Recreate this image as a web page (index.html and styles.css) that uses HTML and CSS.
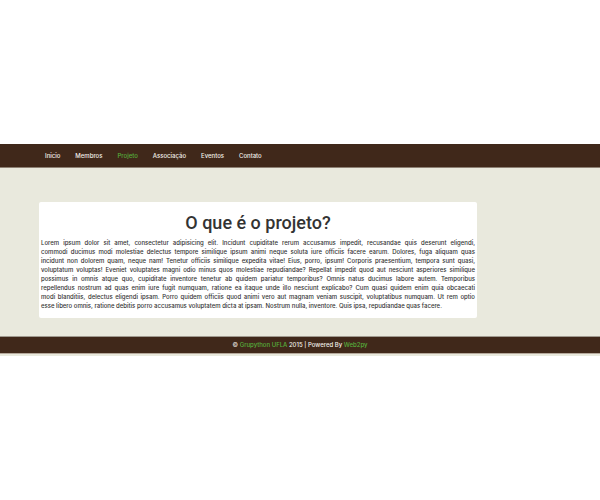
FILE: index.html
```html
<!DOCTYPE html>
<html lang="pt-BR">
<head>
<meta charset="utf-8">
<meta name="viewport" content="width=device-width, initial-scale=1">
<title>O que é o projeto?</title>
<link rel="stylesheet" href="styles.css">
</head>
<body>
<div class="page">
  <nav class="navbar">
    <ul class="menu">
      <li><a href="#">Inicio</a></li>
      <li><a href="#">Membros</a></li>
      <li><a class="active" href="#">Projeto</a></li>
      <li><a href="#">Associação</a></li>
      <li><a href="#">Eventos</a></li>
      <li><a href="#">Contato</a></li>
    </ul>
  </nav>
  <main class="content">
    <article class="panel">
      <h1>O que é o projeto?</h1>
      <p>
        <span class="line">Lorem ipsum dolor sit amet, consectetur adipisicing elit. Incidunt cupiditate rerum accusamus impedit, recusandae quis deserunt eligendi,</span>
        <span class="line">commodi ducimus modi molestiae delectus tempore similique ipsum animi neque soluta iure officiis facere earum. Dolores, fuga aliquam quas</span>
        <span class="line">incidunt non dolorem quam, neque nam! Tenetur officiis similique expedita vitae! Eius, porro, ipsum! Corporis praesentium, tempora sunt quasi,</span>
        <span class="line">voluptatum voluptas! Eveniet voluptates magni odio minus quos molestiae repudiandae? Repellat impedit quod aut nesciunt asperiores similique</span>
        <span class="line">possimus in omnis atque quo, cupiditate inventore tenetur ab quidem pariatur temporibus? Omnis natus ducimus labore autem. Temporibus</span>
        <span class="line">repellendus nostrum ad quas enim iure fugit numquam, ratione ea itaque unde illo nesciunt explicabo? Cum quasi quidem enim quia obcaecati</span>
        <span class="line">modi blanditiis, delectus eligendi ipsam. Porro quidem officiis quod animi vero aut magnam veniam suscipit, voluptatibus numquam. Ut rem optio</span>
        <span class="line">esse libero omnis, ratione debitis porro accusamus voluptatem dicta at ipsam. Nostrum nulla, inventore. Quis ipsa, repudiandae quas facere.</span>
      </p>
    </article>
  </main>
  <footer class="footer">© <a href="#">Grupython UFLA</a> 2015 | Powered By <a href="#">Web2py</a></footer>
</div>
</body>
</html>
```
FILE: styles.css
```css
* {
  box-sizing: border-box;
}

body {
  margin: 0;
  padding-top: 144px;
  background: #fff;
  color: #333;
  font-family: Inter, "Liberation Sans", Arial, sans-serif;
  font-size: 6px;
  font-weight: 500;
  line-height: 9px;
}

a {
  text-decoration: none;
}

.page {
  background: #e9e9dd;
  padding-bottom: 2px;
}

.navbar {
  background: #40281a;
  border-bottom: 1px solid #8d8073;
}

.menu {
  display: flex;
  gap: 15px;
  margin: 0;
  padding: 7px 45px 7px;
  list-style: none;
}

.menu a {
  color: #f4f1ec;
}

.menu a.active,
.footer a {
  color: #56b03c;
}

.content {
  padding: 34px 123px 18px 39px;
}

.panel {
  padding: 11px 2px 8px;
  background: #fff;
  border-radius: 2px;
}

.panel h1 {
  margin: 0 0 5px;
  font-family: Roboto, "Liberation Sans", Arial, sans-serif;
  font-size: 18px;
  font-weight: 500;
  line-height: 20px;
  text-align: center;
}

.panel p {
  margin: 0;
}

.line {
  display: block;
  text-align: justify;
  text-align-last: justify;
}

.line:last-child {
  text-align-last: left;
}

.footer {
  padding: 3px 0 4px;
  border-top: 1px solid #a09a8f;
  border-bottom: 1px solid #b5a99c;
  background: #40281a;
  color: #f4f1ec;
  text-align: center;
}
```
